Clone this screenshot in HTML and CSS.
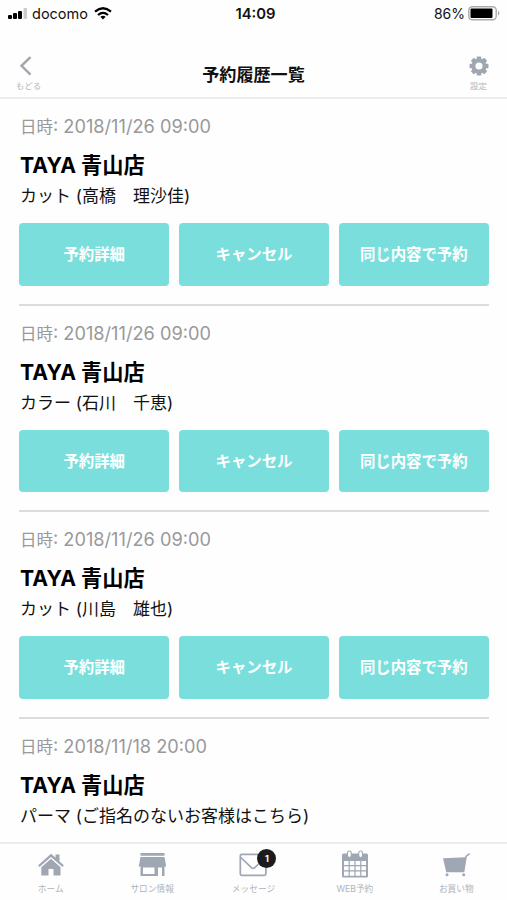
FILE: index.html
```html
<!DOCTYPE html>
<html lang="ja">
<head>
<meta charset="utf-8">
<title>予約履歴一覧</title>
<link rel="stylesheet" href="styles.css">
</head>
<body>
<div class="app">
  <div class="status">
    <div class="carrier">
      <svg width="20" height="12" viewBox="0 0 20 12"><rect x="0" y="7" width="4" height="4" rx="1"/><rect x="5" y="5" width="4" height="6" rx="1"/><rect x="10" y="3" width="4" height="8" rx="1"/><rect x="15.500" y="0" width="3.500" height="11" rx="1" fill="#ccc"/></svg>
      <span class="carrier-name">docomo</span>
      <svg class="wifi" width="18" height="13" viewBox="0 0 18 13"><g fill="none" stroke="#000" stroke-width="2.300"><path d="M1 4.700Q9-2.100 17 4.700"/><path d="M4 8Q9 3.700 14 8"/></g><path d="M6.400 9.800Q9 7.700 11.600 9.800L9 12.500Z"/></svg>
    </div>
    <div class="clock">14:09</div>
    <div class="power"><span>86%</span>
      <svg width="32" height="15" viewBox="0 0 32 15"><rect x=".8" y=".8" width="27.400" height="13" rx="3.500" fill="#fff" stroke="#aaa" stroke-width="1.400"/><rect x="2.500" y="2.600" width="22" height="9.400" rx="1"/><path d="M30 5v4.500q1.400-.6 1.400-2.250T30 5Z" fill="#aaa"/></svg>
    </div>
  </div>
  <header class="header">
    <div class="nav-item back">
      <svg width="20" height="20" viewBox="0 0 20 20"><path d="M14.500 1.200 5.500 9.800l9 8.800" fill="none" stroke="#a0a6ae" stroke-width="2.400"/></svg>
      <span>もどる</span>
    </div>
    <h1>予約履歴一覧</h1>
    <div class="nav-item settings">
      <svg width="20" height="20" viewBox="0 0 20 20"><g fill="#9fa6b0"><g id="teeth"><rect x="7.700" y=".5" width="4.600" height="19" rx="1"/><rect x=".5" y="7.700" width="19" height="4.600" rx="1"/></g><use href="#teeth" transform="rotate(45 10 10)"/><circle cx="10" cy="10" r="7.500"/></g><circle cx="10" cy="10" r="3.600" fill="#fff"/></svg>
      <span>設定</span>
    </div>
  </header>
  <main class="list">
    <section class="record">
      <p class="date"><span class="date-label">日時</span>: 2018/11/26 09:00</p>
      <h2>TAYA 青山店</h2>
      <p class="menu">カット (高橋　理沙佳)</p>
      <div class="actions"><button>予約詳細</button><button>キャンセル</button><button>同じ内容で予約</button></div>
    </section>
    <section class="record">
      <p class="date"><span class="date-label">日時</span>: 2018/11/26 09:00</p>
      <h2>TAYA 青山店</h2>
      <p class="menu">カラー (石川　千恵)</p>
      <div class="actions"><button>予約詳細</button><button>キャンセル</button><button>同じ内容で予約</button></div>
    </section>
    <section class="record">
      <p class="date"><span class="date-label">日時</span>: 2018/11/26 09:00</p>
      <h2>TAYA 青山店</h2>
      <p class="menu">カット (川島　雄也)</p>
      <div class="actions"><button>予約詳細</button><button>キャンセル</button><button>同じ内容で予約</button></div>
    </section>
    <section class="record">
      <p class="date"><span class="date-label">日時</span>: 2018/11/18 20:00</p>
      <h2>TAYA 青山店</h2>
      <p class="menu">パーマ (ご指名のないお客様はこちら)</p>
    </section>
  </main>
  <nav class="tabs">
    <div class="tab">
      <svg width="30" height="30" viewBox="0 0 30 30"><path d="M2.200 15.300 15 3.700l4.500 4V4.500h4v6.900l4.300 3.900-1.300 1.700L15 6.900 3.500 17Z"/><path d="M5.300 17.300 15 8.700l9.500 8.600V25.500h-7V19h-5v6.500H5.300Z"/></svg>
      <span>ホーム</span>
    </div>
    <div class="tab">
      <svg width="30" height="30" viewBox="0 0 30 30"><path d="M3.500 3h24v2.700h-24ZM3.500 6.900h24L29.200 16.500H1.700Z"/><path fill-rule="evenodd" d="M3.500 16h24v10H25v-8.500h-4V26H3.500Zm2.500 1.500v6.500h11.500v-6.500Z"/></svg>
      <span>サロン情報</span>
    </div>
    <div class="tab">
      <div class="icon-wrap">
        <svg width="30" height="30" viewBox="0 0 30 30"><g fill="none" stroke="#9fa7b2" stroke-width="1.700"><rect x="2.300" y="4.300" width="25.600" height="21" rx="1.500"/><path d="M2.900 7.500 13.400 17.600q1.700 1.500 3.400 0L27.400 7.500"/></g></svg>
        <b class="badge">1</b>
      </div>
      <span>メッセージ</span>
    </div>
    <div class="tab">
      <svg width="30" height="30" viewBox="0 0 30 30"><path fill-rule="evenodd" d="M3.500 3.500h23q1.500 0 1.500 1.500v21q0 1.500-1.500 1.500h-23Q2 27.500 2 26V5q0-1.500 1.500-1.500ZM4 11v4h4.600v-4Zm5.800 0v4h4.600v-4Zm5.800 0v4h4.600v-4Zm5.800 0v4H26v-4ZM4 16.200v4h4.600v-4Zm5.800 0v4h4.600v-4Zm5.800 0v4h4.600v-4Zm5.800 0v4H26v-4ZM4 21.400v4.400h4.600v-4.400Zm5.800 0v4.400h4.600v-4.400Zm5.800 0v4.400h4.600v-4.400Zm5.800 0v4.400H26v-4.400Z"/><g fill="#fff" stroke="#9fa7b2" stroke-width="1.100"><rect x="7.500" y="1" width="3.800" height="6.500" rx="1.900"/><rect x="18.700" y="1" width="3.800" height="6.500" rx="1.900"/></g></svg>
      <span>WEB予約</span>
    </div>
    <div class="tab">
      <svg width="30" height="30" viewBox="0 0 30 30"><path d="M2 8.200 25 7.300 23 21.200H5Z"/><path d="M28.600 3.600 25 6.500 22.600 21.500H5" fill="none" stroke="#9fa7b2" stroke-width="1.600"/><circle cx="6" cy="24.800" r="1.500"/><circle cx="22.700" cy="24.800" r="1.500"/></svg>
      <span>お買い物</span>
    </div>
  </nav>
</div>
</body>
</html>
```
FILE: styles.css
```css
* { box-sizing: border-box; margin: 0; padding: 0; }
body {
  background: #fefefe;
  color: #111;
  font-family: Inter, "Noto Sans CJK JP", sans-serif;
}
.app { width: 507px; height: 900px; display: flex; flex-direction: column; overflow: hidden; }
.status {
  height: 27px;
  flex: none;
  display: grid;
  grid-template-columns: 1fr auto 1fr;
  align-items: center;
  padding: 0 7px 0 8px;
  font-size: 14px;
}
.carrier, .power { display: flex; align-items: center; }
.carrier-name { margin: 0 6px 0 4px; font-size: 14.5px; }
.power { justify-content: flex-end; gap: 3px; }
.clock { font-weight: 600; font-size: 14.8px; padding-left: 3px; }
.header {
  height: 72px;
  flex: none;
  display: grid;
  grid-template-columns: 57px 1fr 57px;
  border-bottom: 2px solid #ececec;
}
.header h1 { font-size: 17.1px; line-height: 24px; padding-top: 35px; text-align: center; font-family: "Noto Sans CJK JP", sans-serif; }
.nav-item {
  display: flex;
  flex-direction: column;
  align-items: center;
  padding-top: 29px;
  font-size: 8.5px;
  line-height: 12px;
  color: #b5b8bd;
  gap: 4px;
}
.back svg { margin-right: 6px; }
.nav-item svg { display: block; }
.list { flex: 1; min-height: 0; overflow: hidden; padding: 0 18px 0 19px; }
.record { height: 206.5px; padding-top: 16px; border-bottom: 2px solid #dcdcdc; }
.date { font-size: 18.2px; line-height: 22px; color: #999; white-space: nowrap; padding-left: 1px; }
.date-label { font-size: 16.5px; }
h2 { font-size: 21.2px; line-height: 30px; margin-top: 12px; padding-left: 1px; color: #000; }
.menu { font-size: 17px; line-height: 24px; margin-top: 4px; padding-left: 1px; white-space: nowrap; }
.actions { display: grid; grid-template-columns: repeat(3, 1fr); gap: 9.3px; margin-top: 15px; }
button {
  height: 62.5px;
  padding-bottom: 2px;
  border: 0;
  border-radius: 4px;
  background: #7adfdc;
  color: #fff;
  font: 700 15.4px "Noto Sans CJK JP", sans-serif;
}
.tabs {
  height: 58px;
  flex: none;
  display: grid;
  grid-template-columns: repeat(5, 1fr);
  border-top: 2px solid #ececec;
}
.tab {
  display: flex;
  flex-direction: column;
  align-items: center;
  padding-top: 6px;
  font-size: 8.7px;
  line-height: 12px;
  color: #b0b4ba;
  gap: 3px;
}
.tab svg { display: block; fill: #9fa7b2; }
.icon-wrap { position: relative; }
.badge {
  position: absolute;
  left: 19px;
  top: -1px;
  width: 19px;
  height: 19px;
  border-radius: 50%;
  background: #1c1c1c;
  color: #fff;
  font-size: 9px;
  line-height: 19px;
  text-align: center;
}
```
